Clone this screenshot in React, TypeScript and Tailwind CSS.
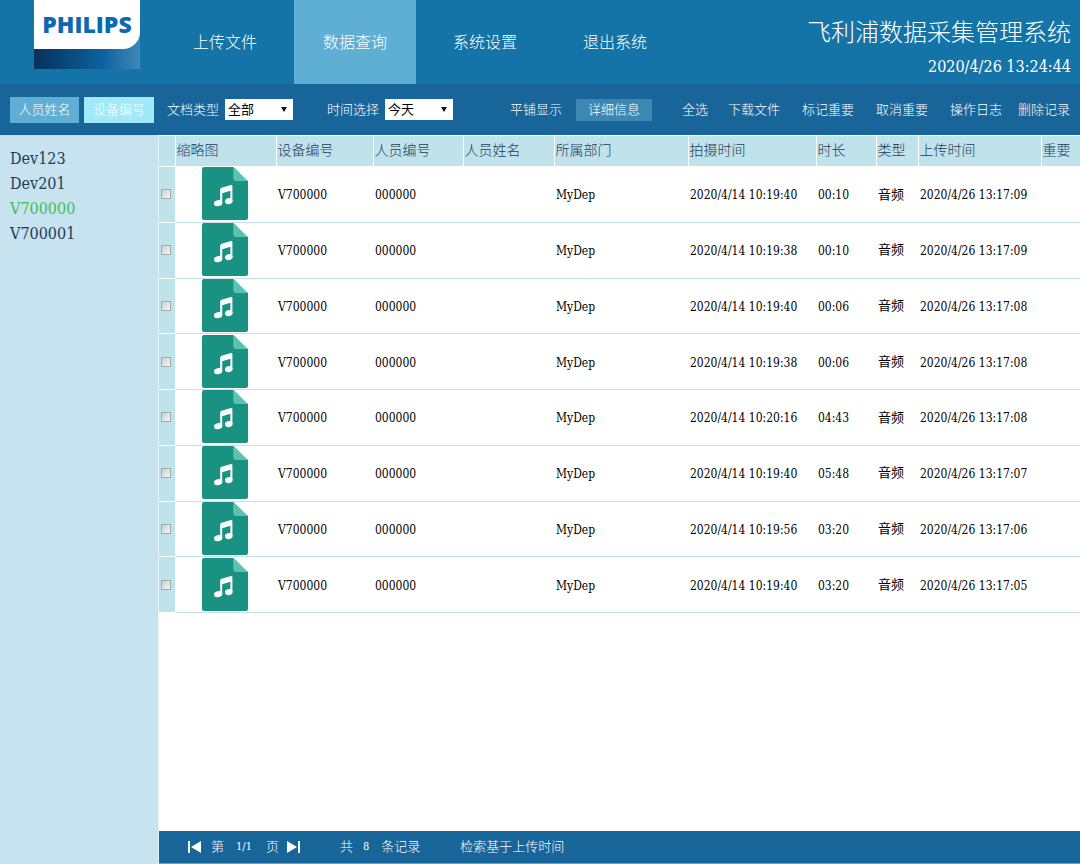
import { ReactNode } from 'react';

const navItems = ['上传文件', '数据查询', '系统设置', '退出系统'];
const actions = ['下载文件', '标记重要', '取消重要', '操作日志'];
const devices = ['Dev123', 'Dev201', 'V700000', 'V700001'];
const headings = ['缩略图', '设备编号', '人员编号', '人员姓名', '所属部门', '拍摄时间', '时长', '类型', '上传时间', '重要'];

const records = [
  { shot: '2020/4/14 10:19:40', length: '00:10', uploaded: '2020/4/26 13:17:09' },
  { shot: '2020/4/14 10:19:38', length: '00:10', uploaded: '2020/4/26 13:17:09' },
  { shot: '2020/4/14 10:19:40', length: '00:06', uploaded: '2020/4/26 13:17:08' },
  { shot: '2020/4/14 10:19:38', length: '00:06', uploaded: '2020/4/26 13:17:08' },
  { shot: '2020/4/14 10:20:16', length: '04:43', uploaded: '2020/4/26 13:17:08' },
  { shot: '2020/4/14 10:19:40', length: '05:48', uploaded: '2020/4/26 13:17:07' },
  { shot: '2020/4/14 10:19:56', length: '03:20', uploaded: '2020/4/26 13:17:06' },
  { shot: '2020/4/14 10:19:40', length: '03:20', uploaded: '2020/4/26 13:17:05' },
];

function Logo() {
  return (
    <div className="ml-[34px] h-[69px] w-[106px] shrink-0 bg-linear-to-r from-[#06325a] via-[#0b629f] via-65% to-[#3d88b8]">
      <div className="flex h-[49px] justify-center rounded-br-[17px] bg-white pt-2 font-['Open_Sans',sans-serif] text-[23px] leading-8 font-extrabold text-[#0b69b1]">
        PHILIPS
      </div>
    </div>
  );
}

function AudioIcon() {
  return (
    <svg width="46" height="53" viewBox="0 0 46 53" className="ml-[27px] block" aria-hidden="true">
      <path d="M2 0H31C35 2.500 37 7 46 14V51a2 2 0 0 1-2 2H2a2 2 0 0 1-2-2V2a2 2 0 0 1 2-2Z" fill="#1a9281" />
      <path d="M31.300 0.300C35 2.500 40 9 46 14H34.300a3 3 0 0 1-3-3Z" fill="#5ac4b0" />
      <path d="M18.200 22.500Q18.200 21.200 19.500 20.800L29 18Q30.400 17.700 30.400 19V34H28.400V23.800L20.200 26.200V36.500H18.200Z" fill="#fff" />
      <ellipse cx="16.100" cy="36.200" rx="4.200" ry="3" transform="rotate(-14 16.1 36.2)" fill="#fff" />
      <ellipse cx="26.800" cy="34.100" rx="3.900" ry="2.900" transform="rotate(-14 26.8 34.1)" fill="#fff" />
    </svg>
  );
}

function Filter({ id, label, options }: { id: string; label: string; options: string[] }) {
  return (
    <div className="flex items-center gap-1.5">
      <label htmlFor={id}>{label}</label>
      <div className="relative">
        <select id={id} className="block h-[21px] w-[68px] appearance-none bg-white pl-[3px] leading-5 font-normal text-black">
          {options.map((option) => (
            <option key={option}>{option}</option>
          ))}
        </select>
        <svg width="6" height="5" viewBox="0 0 6 5" className="pointer-events-none absolute top-2 right-1.5" aria-hidden="true">
          <path d="M0 0H6L3 5Z" fill="#111" />
        </svg>
      </div>
    </div>
  );
}

function PageButton({ label, children }: { label: string; children: ReactNode }) {
  return (
    <button type="button" aria-label={label}>
      <svg width="13" height="12" viewBox="0 0 13 12" className="block" fill="#fff" aria-hidden="true">
        {children}
      </svg>
    </button>
  );
}

export default function App() {
  return (
    <div className="flex min-h-screen flex-col bg-white font-['DejaVu_Serif_Condensed','Noto_Sans_CJK_SC',serif] text-[13px] leading-5 whitespace-nowrap text-black">
      <header className="flex h-[84px] items-start bg-[#1574a7] text-white">
        <Logo />
        <nav className="ml-6 flex h-full gap-2 text-base">
          {navItems.map((item, index) => (
            <a
              key={item}
              href="#"
              className={`flex w-[122px] items-center justify-center pt-0.5 font-light ${index === 1 ? 'bg-[#5eafd3]' : ''}`}
            >
              {item}
            </a>
          ))}
        </nav>
        <div className="mt-[17px] mr-[9px] ml-auto text-right">
          <h1 className="text-2xl leading-8 font-light">飞利浦数据采集管理系统</h1>
          <p className="mt-2 text-base leading-5">2020/4/26 13:24:44</p>
        </div>
      </header>

      <div className="flex h-[51px] items-center bg-[#186599] pr-2.5 pl-2.5 font-light text-white">
        <button type="button" className="mr-[5px] h-[26px] w-[69px] bg-[#5eafd3]">人员姓名</button>
        <button type="button" className="mr-[13px] h-[26px] w-[70px] bg-[#a1e9f8]">设备编号</button>
        <Filter id="doc-type" label="文档类型" options={['全部']} />
        <div className="w-[34px]" />
        <Filter id="time-range" label="时间选择" options={['今天']} />
        <div className="ml-auto flex items-center">
          <button type="button" className="mr-3.5">平铺显示</button>
          <button type="button" className="mr-[30px] h-[22px] w-[76px] bg-[#3d88b2]">详细信息</button>
          <button type="button" className="mr-5">全选</button>
          <div className="mr-4 flex gap-[22px]">
            {actions.map((action) => (
              <button key={action} type="button">{action}</button>
            ))}
          </div>
          <button type="button">删除记录</button>
        </div>
      </div>

      <div className="flex grow">
        <aside className="w-[158px] shrink-0 bg-[#c7e3ef] pt-[11px] pl-2.5 text-base leading-[25px] text-[#1c3d5c]">
          <ul>
            {devices.map((device) => (
              <li key={device}>
                <a href="#" className={device === 'V700000' ? 'text-[#45bd57]' : ''}>{device}</a>
              </li>
            ))}
          </ul>
        </aside>

        <div className="flex min-w-0 grow flex-col border-l border-[#e4f3f8]">
          <main className="grow">
            <table className="h-[478px] w-full table-fixed border-collapse text-left">
              <colgroup>
                <col className="w-4" />
                <col className="w-[101px]" />
                <col className="w-[97px]" />
                <col className="w-[90px]" />
                <col className="w-[91px]" />
                <col className="w-[134px]" />
                <col className="w-[128px]" />
                <col className="w-[60px]" />
                <col className="w-[42px]" />
                <col className="w-[123px]" />
                <col />
              </colgroup>
              <thead className="bg-[#bfe2eb] text-sm text-[#1c3d5c]">
                <tr className="h-[31px] border-y border-white">
                  <th className="border-r border-white p-0" />
                  {headings.map((heading) => (
                    <th key={heading} className="border-r border-white p-0 pb-0.5 pl-px leading-5 font-light last:border-r-0">{heading}</th>
                  ))}
                </tr>
              </thead>
              <tbody className="text-xs">
                {records.map((record, index) => (
                  <tr key={index} className="border-b border-[#c4e4ec]">
                    <td className="border-b border-white bg-[#bfe2eb] p-0">
                      <input
                        type="checkbox"
                        aria-label={`V700000 ${record.shot}`}
                        className="ml-0.5 block size-2.5 appearance-none border border-[#a3abad] bg-linear-to-br from-[#cfcfcf] to-[#f5f5f5] checked:from-[#186599] checked:to-[#186599]"
                      />
                    </td>
                    <td className="p-0 pb-px"><AudioIcon /></td>
                    <td className="p-0 pt-0.5 pl-0.5">V700000</td>
                    <td className="p-0 pt-0.5 pl-0.5">000000</td>
                    <td className="p-0" />
                    <td className="p-0 pt-0.5 pl-0.5">MyDep</td>
                    <td className="p-0 pt-0.5 pl-0.5">{record.shot}</td>
                    <td className="p-0 pt-0.5 pl-0.5">{record.length}</td>
                    <td className="p-0 pl-0.5 text-[13px]">音频</td>
                    <td className="p-0 pt-0.5 pl-0.5">{record.uploaded}</td>
                    <td className="p-0" />
                  </tr>
                ))}
              </tbody>
            </table>
          </main>

          <footer className="flex h-[33px] items-center border-b border-[#8796a3] bg-[#186599] pl-[29px] font-light text-white">
            <PageButton label="第一页">
              <path d="M0 0H2V12H0ZM13 0V12L3 6Z" />
            </PageButton>
            <span className="ml-2.5">第</span>
            <span className="ml-3 text-[11px]">1/1</span>
            <span className="ml-3.5">页</span>
            <span className="ml-2 flex">
              <PageButton label="最后一页">
                <path d="M0 0L10 6L0 12ZM11 0H13V12H11Z" />
              </PageButton>
            </span>
            <span className="ml-10">共</span>
            <span className="ml-2.5 text-[11px]">8</span>
            <span className="ml-3">条记录</span>
            <span className="ml-10">检索基于上传时间</span>
          </footer>
        </div>
      </div>
    </div>
  );
}
